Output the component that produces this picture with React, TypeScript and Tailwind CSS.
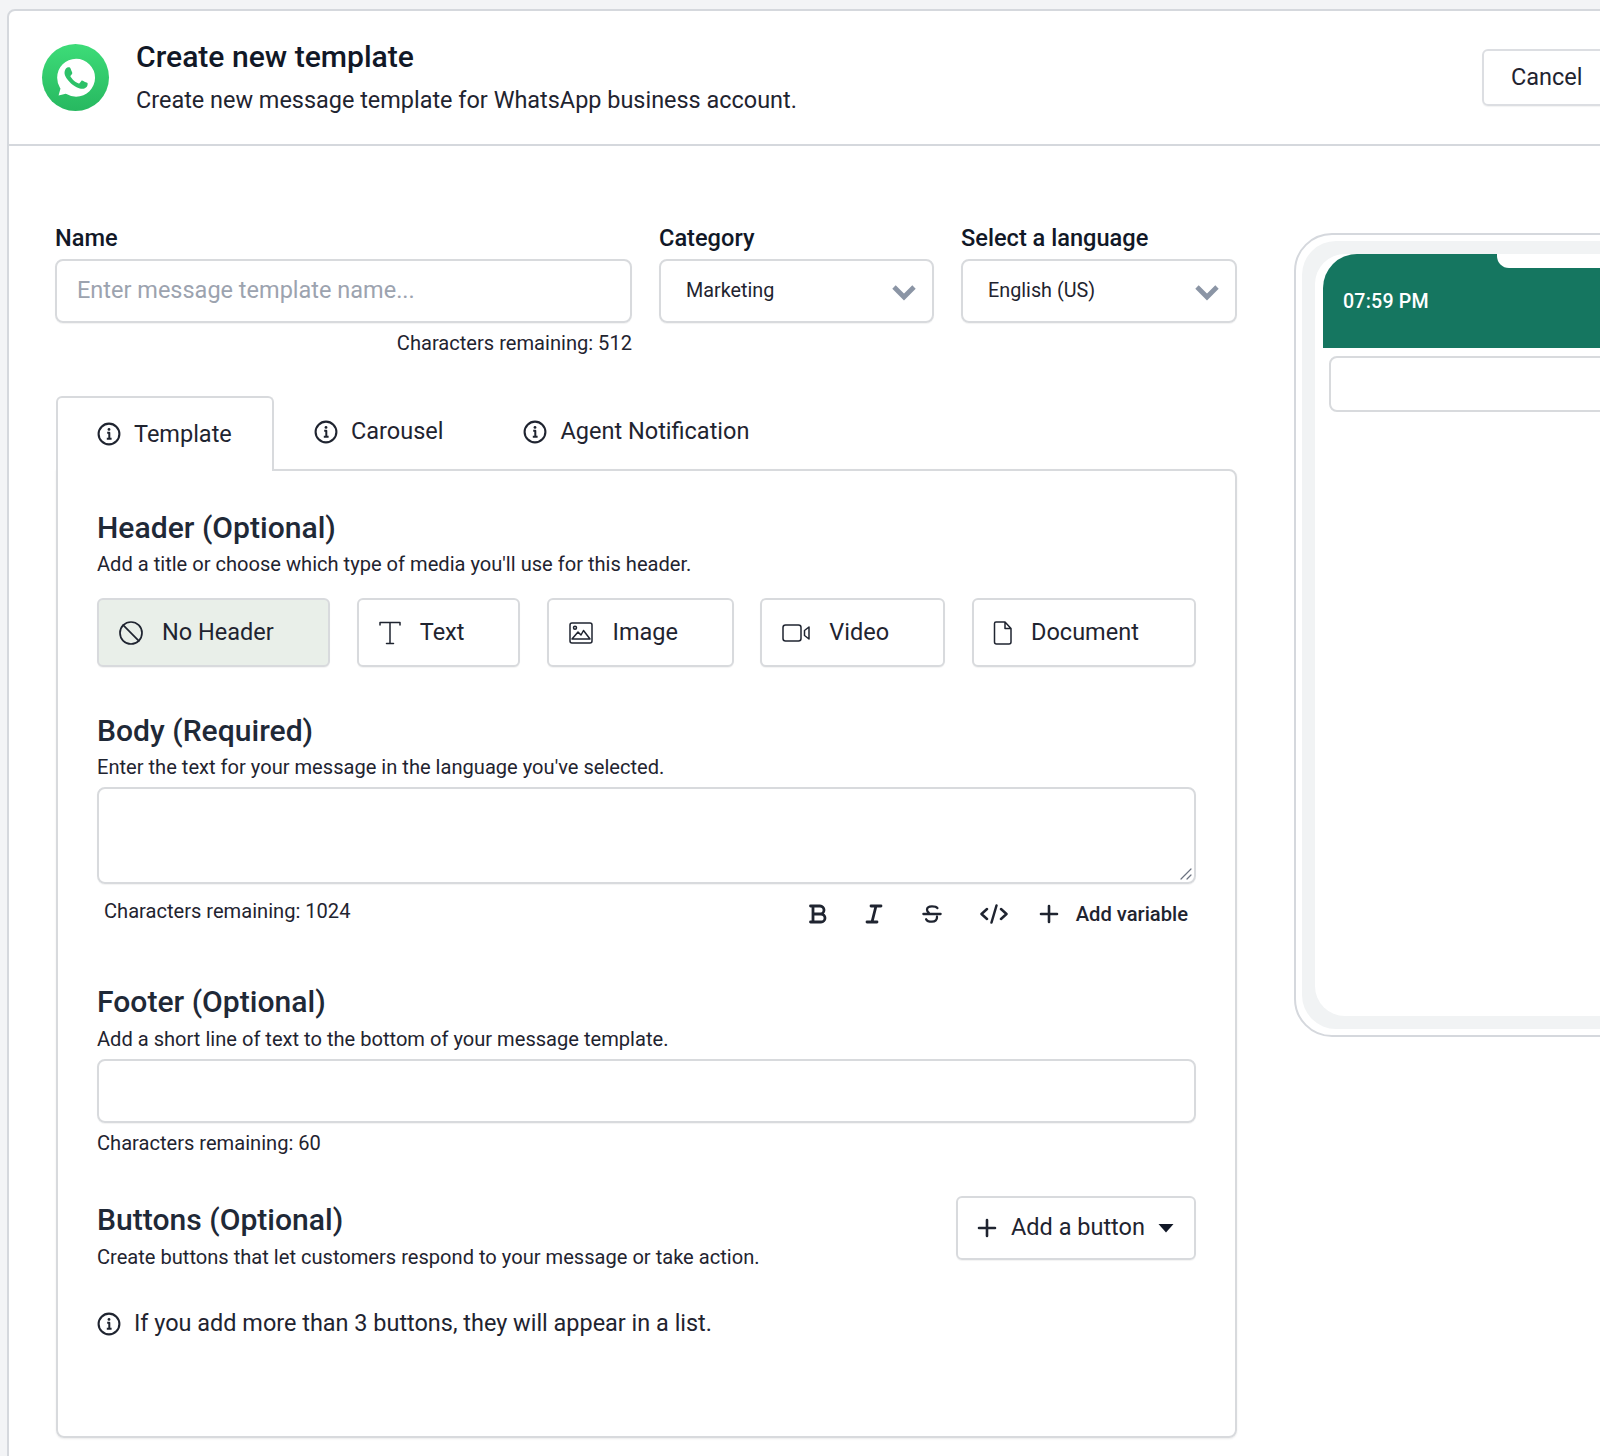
import React from "react";

const sv = { fill: "none", stroke: "currentColor", strokeLinecap: "round" as const, strokeLinejoin: "round" as const };

function WhatsAppLogo() {
  return (
    <div className="w-[67px] h-[67px] rounded-full bg-gradient-to-b from-[#3ddc78] to-[#27b860] flex items-center justify-center">
      <svg viewBox="0 0 24 24" className="w-[46px] h-[46px]">
        <path fill="#ffffff" d="M12.05 21.785h-.004a9.87 9.87 0 01-5.031-1.378l-.361-.214-3.741.982.998-3.648-.235-.374a9.86 9.86 0 01-1.51-5.26c.001-5.45 4.436-9.884 9.888-9.884 2.64 0 5.122 1.03 6.988 2.898a9.825 9.825 0 012.893 6.994c-.003 5.45-4.437 9.884-9.885 9.884" />
        <path fill="#2cc168" d="M17.472 14.382c-.297-.149-1.758-.867-2.03-.967-.273-.099-.471-.148-.67.15-.197.297-.767.966-.94 1.164-.173.199-.347.223-.644.075-.297-.15-1.255-.463-2.39-1.475-.883-.788-1.48-1.761-1.653-2.059-.173-.297-.018-.458.13-.606.134-.133.298-.347.446-.52.149-.174.198-.298.298-.497.099-.198.05-.371-.025-.52-.075-.149-.669-1.612-.916-2.207-.242-.579-.487-.5-.669-.51-.173-.008-.371-.01-.57-.01-.198 0-.52.074-.792.372-.272.297-1.04 1.016-1.04 2.479 0 1.462 1.065 2.875 1.213 3.074.149.198 2.096 3.2 5.077 4.487.709.306 1.262.489 1.694.625.712.227 1.36.195 1.871.118.571-.085 1.758-.719 2.006-1.413.248-.694.248-1.289.173-1.413-.074-.124-.272-.198-.57-.347z" />
      </svg>
    </div>
  );
}

function InfoIcon({ className = "" }: { className?: string }) {
  return (
    <svg viewBox="0 0 24 24" className={className} {...sv} strokeWidth={2.1}>
      <circle cx="12" cy="12" r="10.4" />
      <path d="M10.2 10.8h2.1v5.800M9.800 16.800h4.800" strokeWidth={2} strokeLinecap="butt" />
      <circle cx="12" cy="7.400" r="1.400" fill="currentColor" stroke="none" />
    </svg>
  );
}

function NoHeaderIcon() {
  return (
    <svg viewBox="0 0 26 26" className="w-[26px] h-[26px]" {...sv} strokeWidth={1.7}>
      <circle cx="13" cy="13" r="11" />
      <path d="M5.200 5.200l15.600 15.600" />
    </svg>
  );
}
function TextIcon() {
  return (
    <svg viewBox="0 0 24 26" className="w-[24px] h-[26px]" {...sv} strokeWidth={1.500}>
      <path d="M2 5V2.500h20V5M12 2.500v21M8.500 23.500h7" />
    </svg>
  );
}
function ImageIcon() {
  return (
    <svg viewBox="0 0 24 22" className="w-[24px] h-[22px]" {...sv} strokeWidth={1.500}>
      <rect x="1" y="1" width="22" height="20" rx="2" />
      <circle cx="6" cy="5.800" r="1.500" />
      <path d="M3 17l6-7 3 3 2.500-4.500L21 17M3 17h18" />
    </svg>
  );
}
function VideoIcon() {
  return (
    <svg viewBox="0 0 28 20" className="w-[28px] h-[20px]" {...sv} strokeWidth={1.500}>
      <rect x="1" y="2" width="18" height="16" rx="2.500" />
      <path d="M27 4v12l-4.500-3.500v-5z" />
    </svg>
  );
}
function DocIcon() {
  return (
    <svg viewBox="0 0 20 24" className="w-[20px] h-[24px]" {...sv} strokeWidth={1.500}>
      <path d="M3 1h9l6 6.500V21a2 2 0 0 1-2 2H3.500A2 2 0 0 1 1.500 21V2.500A1.500 1.500 0 0 1 3 1zM12 1v6.500h6" />
    </svg>
  );
}
function BoldIcon() {
  return (
    <svg viewBox="0 0 18 20" className="w-[18px] h-[20px]" {...sv} strokeWidth={2.800}>
      <path d="M1.500 2h9.500a4 4 0 0 1 0 8H4M4 2v16M4 10h8a4 4 0 0 1 0 8H1.500" />
    </svg>
  );
}
function ItalicIcon() {
  return (
    <svg viewBox="0 0 18 20" className="w-[18px] h-[20px]" {...sv} strokeWidth={2.800}>
      <path d="M6 2h10M2 18h10M11 2L7 18" />
    </svg>
  );
}
function StrikeIcon() {
  return (
    <svg viewBox="0 0 22 22" className="w-[20px] h-[22px]" {...sv} strokeWidth={2.500}>
      <path d="M1.500 11h19M17 4.500C16 3 14 2.500 11 2.500c-3.500 0-5.500 1.500-5.500 3.800 0 1.500.8 2.500 2 3.200M16.500 14c.3 3.500-2 5.500-5.500 5.500-3 0-5.500-.8-6.500-2.800" />
    </svg>
  );
}
function CodeIcon() {
  return (
    <svg viewBox="0 0 28 20" className="w-[28px] h-[20px]" {...sv} strokeWidth={2.500}>
      <path d="M7 5l-5.500 5L7 15M21 5l5.500 5L21 15M16.500 1.500l-5 17" />
    </svg>
  );
}
function PlusIcon() {
  return (
    <svg viewBox="0 0 20 20" className="w-[20px] h-[20px]" {...sv} strokeWidth={2.600}>
      <path d="M10 2v16M2 10h16" />
    </svg>
  );
}
function Chevron() {
  return (
    <svg viewBox="0 0 26 18" className="w-[26px] h-[18px] mt-[2px] text-[#8b95a5]" {...sv} strokeWidth={4.800}>
      <path d="M3 4L13 14L23 4" strokeLinecap="butt" strokeLinejoin="miter" />
    </svg>
  );
}

function HeaderOption({ icon, label, w, active, gap }: { icon: React.ReactNode; label: string; w: string; active?: boolean; gap: string }) {
  return (
    <div className={`${w} h-[69px] flex items-center border-2 border-[#d8dadd] rounded-[6px] shadow-[0_1px_1px_rgba(0,0,0,0.05)] ${active ? "bg-[#e9efe9]" : "bg-white"}`}>
      <div className={`flex items-center ${gap}`}>
        {icon}
        <span className="text-[23.500px] text-[#1f2430]">{label}</span>
      </div>
    </div>
  );
}

function Tab({ label, active }: { label: string; active?: boolean }) {
  if (active) {
    return (
      <div className="w-[218px] h-[75px] -mb-[2px] relative z-10 bg-white border-2 border-b-0 border-[#d8dadd] rounded-t-[6px] flex items-center pl-[39px] gap-[13px] pt-[1px]">
        <InfoIcon className="w-[24px] h-[24px] -mt-[3px] text-[#1f2430]" />
        <span className="text-[23.500px] text-[#1f2430]">{label}</span>
      </div>
    );
  }
  return (
    <div className="h-[73px] flex items-center gap-[13px] pb-[1px]">
      <InfoIcon className="w-[24px] h-[24px] text-[#1f2430]" />
      <span className="text-[23.500px] text-[#1f2430]">{label}</span>
    </div>
  );
}

export default function App() {
  return (
    <div className="w-[1600px] h-[1456px] overflow-hidden bg-[#f3f4f6] pt-[9px] pl-[7px] [font-family:Roboto,sans-serif] text-[#1f2430]">
      <div className="w-[1700px] h-[1500px] bg-white border-2 border-[#d5d8dd] rounded-tl-[8px]">
        {/* header */}
        <div className="h-[135px] border-b-2 border-[#d5d8dd] flex items-center pl-[33px]">
          <WhatsAppLogo />
          <div className="ml-[27px] w-[1346px] flex flex-col">
            <div className="text-[30.100px] font-medium leading-[34px] -mt-[1px] text-[#111827]">Create new template</div>
            <div className="text-[23.450px] leading-[30px] mt-[11px] text-[#1f2430]">Create new message template for WhatsApp business account.</div>
          </div>
          <div className="w-[200px] h-[57px] border-2 border-[#dcdee2] rounded-[6px] flex items-center pl-[27px] text-[23.500px] text-[#1f2430] shadow-[0_1px_1px_rgba(0,0,0,0.05)]">Cancel</div>
        </div>

        <div className="flex pl-[47px] pt-[78px]">
          {/* left column */}
          <div className="w-[1181px]">
            <div className="flex gap-[27px] -ml-[1px]">
              <div className="w-[577px]">
                <div className="text-[23.600px] font-medium leading-[28px] text-[#111827]">Name</div>
                <div className="mt-[7px] h-[64px] border-2 border-[#d8dadd] rounded-[8px] flex items-center pl-[20px] text-[23.500px] text-[#9ca3af] shadow-[0_1px_1px_rgba(0,0,0,0.05)]">Enter message template name...</div>
                <div className="text-right text-[20.100px] leading-[24px] mt-[8px]">Characters remaining: 512</div>
              </div>
              <div className="w-[275px]">
                <div className="text-[23.600px] font-medium leading-[28px] text-[#111827]">Category</div>
                <div className="mt-[7px] h-[64px] border-2 border-[#d8dadd] rounded-[8px] flex items-center justify-between pl-[25px] pr-[15px] text-[19.800px] shadow-[0_1px_1px_rgba(0,0,0,0.05)]">
                  <span>Marketing</span><Chevron />
                </div>
              </div>
              <div className="w-[276px]">
                <div className="text-[23.600px] font-medium leading-[28px] text-[#111827]">Select a language</div>
                <div className="mt-[7px] h-[64px] border-2 border-[#d8dadd] rounded-[8px] flex items-center justify-between pl-[25px] pr-[15px] text-[19.800px] shadow-[0_1px_1px_rgba(0,0,0,0.05)]">
                  <span>English (US)</span><Chevron />
                </div>
              </div>
            </div>

            {/* tabs */}
            <div className="flex items-end mt-[41px]">
              <Tab label="Template" active />
              <div className="flex-1 flex gap-[80px] pl-[40px]">
                <Tab label="Carousel" />
                <Tab label="Agent Notification" />
              </div>
            </div>

            {/* panel */}
            <div className="h-[969px] border-2 border-[#d8dadd] rounded-b-[8px] rounded-tr-[8px] pl-[39px] pr-[39px] pt-[39px] shadow-[0_1px_2px_rgba(0,0,0,0.08)]">
              <h2 className="text-[30.100px] font-medium leading-[36px] text-[#1f2937]">Header (Optional)</h2>
              <p className="text-[20.100px] leading-[26px] mt-[5px]">Add a title or choose which type of media you'll use for this header.</p>
              <div className="flex justify-between mt-[21px]">
                <HeaderOption w="w-[233px] pl-[19px]" gap="gap-[18px]" icon={<NoHeaderIcon />} label="No Header" active />
                <HeaderOption w="w-[163px] pl-[19px]" gap="gap-[18px]" icon={<TextIcon />} label="Text" />
                <HeaderOption w="w-[187px] pl-[20px]" gap="gap-[20px]" icon={<ImageIcon />} label="Image" />
                <HeaderOption w="w-[185px] pl-[20px]" gap="gap-[19px]" icon={<VideoIcon />} label="Video" />
                <HeaderOption w="w-[224px] pl-[19px]" gap="gap-[18px]" icon={<DocIcon />} label="Document" />
              </div>

              <h2 className="text-[30.100px] font-medium leading-[36px] mt-[46px] text-[#1f2937]">Body (Required)</h2>
              <p className="text-[20.100px] leading-[26px] mt-[5px]">Enter the text for your message in the language you've selected.</p>
              <div className="relative h-[97px] mt-[7px] border-2 border-[#d8dadd] rounded-[8px] shadow-[0_1px_1px_rgba(0,0,0,0.05)]">
                <svg viewBox="0 0 14 14" className="absolute right-[1px] bottom-[1px] w-[14px] h-[14px] text-[#6b7280]" {...sv} strokeWidth={1.200}>
                  <path d="M2 12L12 2M8 12l4-4" />
                </svg>
              </div>
              <div className="flex items-center justify-between h-[42px] mt-[9px]">
                <span className="text-[20.100px] pl-[7px] -mt-[5px]">Characters remaining: 1024</span>
                <div className="flex items-center pr-[8px] text-[#1f2430]">
                  <BoldIcon />
                  <span className="ml-[38px]"><ItalicIcon /></span>
                  <span className="ml-[39px]"><StrikeIcon /></span>
                  <span className="ml-[38px]"><CodeIcon /></span>
                  <span className="ml-[31px]"><PlusIcon /></span>
                  <span className="ml-[17px] text-[20.200px] font-medium">Add variable</span>
                </div>
              </div>

              <h2 className="text-[30.100px] font-medium leading-[36px] mt-[49px] text-[#1f2937]">Footer (Optional)</h2>
              <p className="text-[20.100px] leading-[26px] mt-[6px]">Add a short line of text to the bottom of your message template.</p>
              <div className="h-[64px] mt-[7px] border-2 border-[#d8dadd] rounded-[8px] shadow-[0_1px_1px_rgba(0,0,0,0.05)]" />
              <p className="text-[20.100px] leading-[24px] mt-[8px]">Characters remaining: 60</p>

              <div className="flex justify-between items-start mt-[41px]">
                <div className="pt-[6px]">
                  <h2 className="text-[30.100px] font-medium leading-[36px] text-[#1f2937]">Buttons (Optional)</h2>
                  <p className="text-[20.100px] leading-[26px] mt-[6px]">Create buttons that let customers respond to your message or take action.</p>
                </div>
                <div className="w-[240px] h-[64px] border-2 border-[#d8dadd] rounded-[6px] flex items-center pl-[19px] shadow-[0_1px_1px_rgba(0,0,0,0.05)]">
                  <PlusIcon />
                  <span className="ml-[14px] text-[23.500px]">Add a button</span>
                  <svg viewBox="0 0 16 10" className="ml-[13px] w-[16px] h-[10px] text-[#111827]"><path d="M0.500 1h15L8 9.500z" fill="currentColor" /></svg>
                </div>
              </div>

              <div className="flex items-center gap-[13px] mt-[36px]">
                <InfoIcon className="w-[24px] h-[24px] text-[#1f2430]" />
                <span className="text-[23.450px]">If you add more than 3 buttons, they will appear in a list.</span>
              </div>
            </div>
          </div>

          {/* phone */}
          <div className="ml-[57px] mt-[9px] w-[400px] h-[804px] border-2 border-[#d5d8dd] rounded-[38px] p-[6px]">
            <div className="h-full bg-[#f1f3f4] rounded-[34px] p-[13px]">
              <div className="h-full bg-white rounded-[30px] relative">
                <div className="ml-[8px] h-[94px] bg-[#157660] rounded-tl-[34px] pl-[20px] pt-[36px] text-white text-[19.600px] font-medium leading-[24px] tracking-[0.2px] relative">
                  07:59 PM
                  <div className="absolute left-[174px] top-0 w-[300px] h-[14px] bg-white rounded-bl-[12px]" />
                </div>
                <div className="ml-[14px] mt-[8px] w-[400px] h-[56px] border-2 border-[#d8dadd] rounded-[8px]" />
              </div>
            </div>
          </div>
        </div>
      </div>
    </div>
  );
}
